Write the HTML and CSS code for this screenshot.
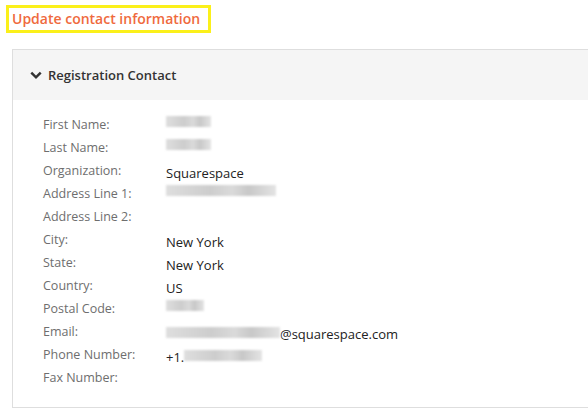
FILE: index.html
```html
<!DOCTYPE html>
<html>
<head>
<meta charset="utf-8">
<link rel="stylesheet" href="styles.css">
</head>
<body>
<div class="title-wrap"><h1 class="title">Update contact information</h1></div>
<section class="panel">
  <div class="panel-head">
    <svg class="chev" width="12" height="9" viewBox="0 0 12 9"><path d="M1.3 1.6 L6 6.3 L10.7 1.6" fill="none" stroke="#333" stroke-width="2.5"/></svg>
    <span>Registration Contact</span>
  </div>
  <div class="panel-body">
    <div class="row"><span class="lbl">First Name:</span><span class="val"><span class="blur" style="width:45px"></span></span></div>
    <div class="row"><span class="lbl">Last Name:</span><span class="val"><span class="blur" style="width:45px"></span></span></div>
    <div class="row"><span class="lbl">Organization:</span><span class="val">Squarespace</span></div>
    <div class="row"><span class="lbl">Address Line 1:</span><span class="val"><span class="blur" style="width:110px"></span></span></div>
    <div class="row"><span class="lbl">Address Line 2:</span><span class="val"></span></div>
    <div class="row"><span class="lbl">City:</span><span class="val">New York</span></div>
    <div class="row"><span class="lbl">State:</span><span class="val">New York</span></div>
    <div class="row"><span class="lbl">Country:</span><span class="val">US</span></div>
    <div class="row"><span class="lbl">Postal Code:</span><span class="val"><span class="blur" style="width:38px"></span></span></div>
    <div class="row"><span class="lbl">Email:</span><span class="val"><span class="blur" style="width:114px"></span>@squarespace.com</span></div>
    <div class="row"><span class="lbl">Phone Number:</span><span class="val">+1.<span class="blur" style="width:78px"></span></span></div>
    <div class="row"><span class="lbl">Fax Number:</span><span class="val"></span></div>
  </div>
</section>
</body>
</html>
```
FILE: styles.css
```css
html, body { margin: 0; padding: 0; background: #fff; }
body {
  font-family: "Open Sans", "Liberation Sans", sans-serif;
  width: 588px;
  height: 420px;
  overflow: hidden;
}
.title-wrap {
  padding: 5px 0 0 6px;
  height: 49px;
  box-sizing: border-box;
}
.title {
  display: inline-block;
  margin: 0;
  border: 3px solid #fbf01a;
  padding: 2px 6px 2px 3px;
  font-size: 14px;
  font-weight: 600;
  line-height: 18px;
  color: #ef6a3d;
  width: 190px;
  white-space: nowrap;
}
.panel {
  margin-left: 12px;
  width: 620px;
  border: 1px solid #dedede;
  border-right: none;
}
.panel-head {
  height: 50px;
  background: #f5f5f5;
  display: flex;
  align-items: center;
  padding-left: 17px;
  gap: 6px;
  font-size: 13px;
  font-weight: 600;
  color: #333;
  box-sizing: border-box;
}
.chev { margin-top: 1px; }
.panel-body {
  padding: 17px 0 14px 30px;
}
.row {
  display: flex;
  height: 23px;
  align-items: flex-start;
  line-height: 16px;
}
.lbl {
  width: 123px;
  color: #6e6e6e;
  font-size: 12.5px;
  flex: none;
}
.val {
  color: #222;
  font-size: 13px;
  padding-top: 2px;
  display: flex;
  align-items: center;
  white-space: nowrap;
}
.blur {
  display: inline-block;
  height: 11px;
  margin-top: -3px;
  background: linear-gradient(90deg, #dedede, #cdcdcd 40%, #dadada 60%, #c8c8c8 75%, #e4e4e4);
  filter: blur(0.8px);
}
```
